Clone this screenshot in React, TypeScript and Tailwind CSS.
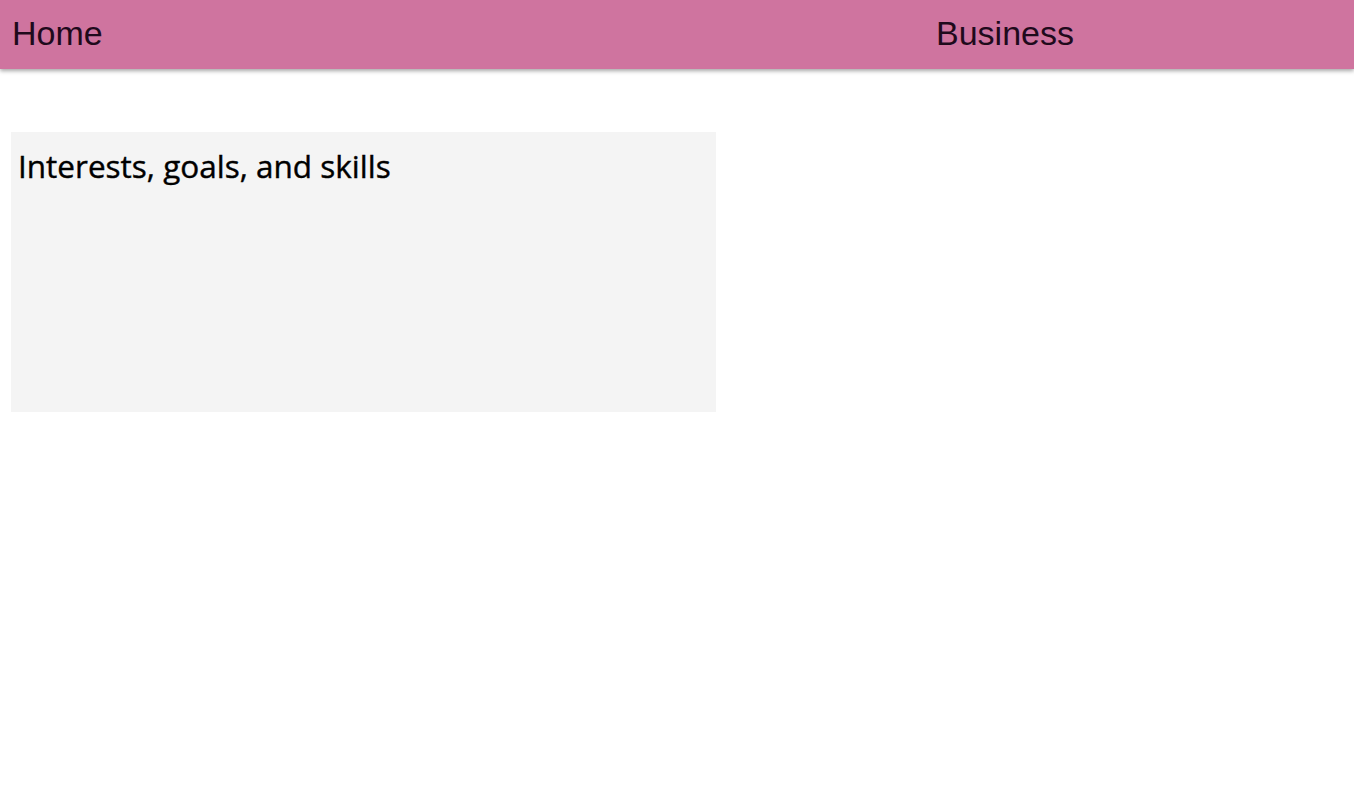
export default function App() {
  return (
    <div className="min-h-[790px] bg-white">
      <header
        className="flex h-[69px] items-center bg-[#cf749f] pb-[3px] shadow-[0_2px_4px_rgba(0,0,0,0.35)] text-[#1f0a1c]"
        style={{ fontFamily: '"Liberation Sans", Arial, sans-serif' }}
      >
        <div className="w-[936px] pl-[12px] text-[34px] leading-none">Home</div>
        <div className="text-[34px] leading-none">Business</div>
      </header>
      <main className="pt-[63px] pl-[11px]">
        <section className="h-[280px] w-[705px] bg-[#f4f4f4] px-[7px] pt-[14px]">
          <h2
            className="text-[31.5px] leading-[40px] text-black [-webkit-text-stroke:0.4px_black]"
            style={{ fontFamily: '"Open Sans", "Noto Sans", sans-serif' }}
          >
            Interests, goals, and skills
          </h2>
        </section>
      </main>
    </div>
  );
}
